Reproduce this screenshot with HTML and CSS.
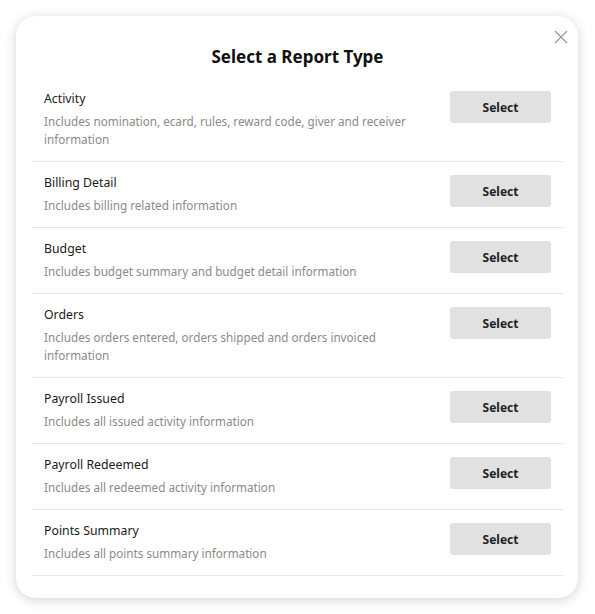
FILE: index.html
```html
<!DOCTYPE html>
<html>
<head>
<meta charset="utf-8">
<link rel="stylesheet" href="styles.css">
</head>
<body>
<div class="modal">
  <button class="close" aria-label="Close">
    <svg width="14" height="14" viewBox="0 0 14 14"><path d="M1 1L13 13M13 1L1 13" stroke="#9a9a9a" stroke-width="1.4" fill="none"/></svg>
  </button>
  <h1 class="title">Select a Report Type</h1>
  <div class="list">
    <div class="row">
      <div class="info">
        <div class="name">Activity</div>
        <div class="desc">Includes nomination, ecard, rules, reward code, giver and receiver information</div>
      </div>
      <button class="select">Select</button>
    </div>
    <div class="row">
      <div class="info">
        <div class="name">Billing Detail</div>
        <div class="desc">Includes billing related information</div>
      </div>
      <button class="select">Select</button>
    </div>
    <div class="row">
      <div class="info">
        <div class="name">Budget</div>
        <div class="desc">Includes budget summary and budget detail information</div>
      </div>
      <button class="select">Select</button>
    </div>
    <div class="row">
      <div class="info">
        <div class="name">Orders</div>
        <div class="desc">Includes orders entered, orders shipped and orders invoiced information</div>
      </div>
      <button class="select">Select</button>
    </div>
    <div class="row">
      <div class="info">
        <div class="name">Payroll Issued</div>
        <div class="desc">Includes all issued activity information</div>
      </div>
      <button class="select">Select</button>
    </div>
    <div class="row">
      <div class="info">
        <div class="name">Payroll Redeemed</div>
        <div class="desc">Includes all redeemed activity information</div>
      </div>
      <button class="select">Select</button>
    </div>
    <div class="row">
      <div class="info">
        <div class="name">Points Summary</div>
        <div class="desc">Includes all points summary information</div>
      </div>
      <button class="select">Select</button>
    </div>
  </div>
</div>
</body>
</html>
```
FILE: styles.css
```css
html, body {
  margin: 0;
  padding: 0;
  background: #ffffff;
}
body {
  padding: 16px 17px 16px 16px;
  font-family: "Noto Sans", "Open Sans", sans-serif;
}
.modal {
  position: relative;
  width: 562px;
  box-sizing: border-box;
  background: #fff;
  border-radius: 20px;
  box-shadow: 0 2px 12px rgba(0, 0, 0, 0.18);
  padding: 29px 15px 22px 16px;
}
.close {
  position: absolute;
  top: 11px;
  right: 7px;
  width: 20px;
  height: 20px;
  padding: 0;
  border: 0;
  background: none;
  display: flex;
  align-items: center;
  justify-content: center;
}
.title {
  margin: 0 0 9px;
  text-align: center;
  font-size: 17px;
  line-height: 24px;
  font-weight: 700;
  color: #111;
}
.row {
  display: flex;
  align-items: flex-start;
  justify-content: space-between;
  gap: 24px;
  padding: 12px 12px 13px 12px;
  border-bottom: 1px solid #e6e6e6;
}
.info {
  flex: 1;
  display: flex;
  flex-direction: column;
  gap: 4px;
}
.name {
  font-size: 12.3px;
  line-height: 18px;
  color: #1a1a1a;
}
.desc {
  font-size: 11.7px;
  line-height: 18px;
  color: #8a8a8a;
  max-width: 380px;
}
.select {
  margin-top: 1px;
  width: 101px;
  height: 32px;
  flex: none;
  border: 0;
  border-radius: 3px;
  background: #e1e1e1;
  font-family: "Noto Sans", "Open Sans", sans-serif;
  font-size: 12px;
  font-weight: 700;
  color: #222;
}
```
